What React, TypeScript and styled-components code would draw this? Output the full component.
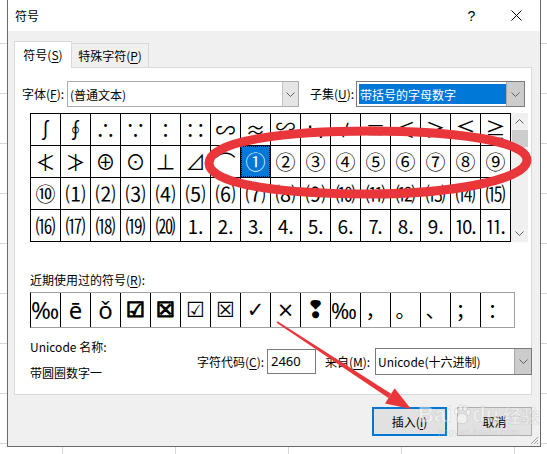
import React from 'react';
import styled, { createGlobalStyle } from 'styled-components';

const Global = createGlobalStyle`
  html, body { margin: 0; padding: 0; }
  body {
    font-family: "Noto Sans CJK SC", "Noto Sans", sans-serif;
    font-size: 12px;
    color: #000;
  }
`;

const Page = styled.div`
  position: relative;
  width: 547px;
  height: 454px;
  overflow: hidden;
  box-sizing: border-box;
  padding-left: 7px;
  background-color: #fff;
  background-image: linear-gradient(to bottom, #d6d6d6 1px, transparent 1px),
    linear-gradient(to right, #d6d6d6 1px, transparent 1px);
  background-size: 113px 50px;
  background-position: 62px 43px;
`;

const Dialog = styled.div`
  position: relative;
  width: 534px;
  height: 447px;
  box-sizing: border-box;
  border: 1px solid #6a6a6a;
  border-top: none;
  display: flex;
  flex-direction: column;
  background: #f0f0f0;
`;

const TitleBar = styled.div`
  height: 31px;
  flex: none;
  background: #fff;
  display: flex;
  align-items: center;
  padding-left: 7px;
`;

const Title = styled.span`
  font-size: 12px;
  line-height: 16px;
`;

const TitleButton = styled.div`
  width: 45px;
  height: 31px;
  display: flex;
  align-items: center;
  justify-content: center;
  font-family: "Liberation Sans", sans-serif;
  font-size: 14px;
`;

const TitleButtons = styled.div`
  margin-left: auto;
  display: flex;
  margin-right: 1px;
`;

const Body = styled.div`
  flex: 1;
  display: flex;
  flex-direction: column;
  padding: 10px 8px 0 6px;
`;

const TabRow = styled.div`
  height: 26px;
  display: flex;
  align-items: flex-end;
`;

const Tab = styled.div<{ $active?: boolean }>`
  box-sizing: border-box;
  height: ${(p) => (p.$active ? 27 : 24)}px;
  width: ${(p) => (p.$active ? 58 : 77)}px;
  margin-bottom: ${(p) => (p.$active ? -1 : 0)}px;
  border: 1px solid #d9d9d9;
  border-bottom: none;
  ${(p) => (p.$active ? '' : 'border-left: none;')}
  background: ${(p) => (p.$active ? '#fff' : '#f0f0f0')};
  position: relative;
  z-index: ${(p) => (p.$active ? 1 : 0)};
  display: flex;
  align-items: center;
  justify-content: center;
  font-size: 12px;
  line-height: 16px;
`;

const U = styled.span`
  text-decoration: underline;
  text-underline-offset: 2px;
`;

const Panel = styled.div`
  box-sizing: border-box;
  height: 328px;
  border: 1px solid #d9d9d9;
  background: #fff;
  padding: 13px 0 0 7px;
  display: flex;
  flex-direction: column;
`;

const Row = styled.div`
  display: flex;
  align-items: center;
`;

const Label = styled.span<{ $w: number; $ml?: number }>`
  width: ${(p) => p.$w}px;
  margin-left: ${(p) => p.$ml ?? 0}px;
  flex: none;
  font-size: 12px;
  line-height: 16px;
  white-space: nowrap;
`;

const Combo = styled.div<{ $w: number; $h?: number; $dark?: boolean }>`
  box-sizing: border-box;
  width: ${(p) => p.$w}px;
  height: ${(p) => p.$h ?? 26}px;
  border: 1px solid ${(p) => (p.$dark ? '#7a7a7a' : '#acacac')};
  background: #fff;
  display: flex;
  flex: none;
`;

const ComboText = styled.div`
  flex: 1;
  display: flex;
  align-items: center;
  padding-left: 2px;
  font-size: 12px;
  white-space: nowrap;
  overflow: hidden;
`;

const ComboSelected = styled.div`
  flex: 1;
  margin: 2px 0 2px 2px;
  background: #0078d7;
  color: #fff;
  display: flex;
  align-items: center;
  padding-left: 1px;
  font-size: 12px;
  white-space: nowrap;
`;

const ComboButton = styled.div<{ $w: number; $dark?: boolean }>`
  width: ${(p) => p.$w}px;
  flex: none;
  box-sizing: border-box;
  background: ${(p) => (p.$dark ? '#cccccc' : '#e5e5e5')};
  border-left: 1px solid ${(p) => (p.$dark ? '#a8a8a8' : '#c4c4c4')};
  display: flex;
  align-items: center;
  justify-content: center;
`;

const GridArea = styled.div`
  margin-top: 6px;
  margin-left: 8px;
  display: flex;
`;

const SymbolGrid = styled.div`
  display: grid;
  grid-template-columns: repeat(16, 29px);
  grid-auto-rows: 31px;
  gap: 1px;
  background: #000;
  border: 1px solid #000;
`;

const Cell = styled.div<{ $selected?: boolean; $size?: number; $narrow?: boolean }>`
  background: ${(p) => (p.$selected ? '#0078d7' : '#fff')};
  color: ${(p) => (p.$selected ? '#fff' : '#000')};
  ${(p) => (p.$selected ? 'outline: 1px dotted #000; outline-offset: -1px;' : '')}
  display: flex;
  align-items: center;
  justify-content: center;
  font-family: "Noto Sans CJK SC", "DejaVu Sans", sans-serif;
  font-size: ${(p) => p.$size ?? 20}px;
  letter-spacing: ${(p) => (p.$narrow ? '-1px' : '0')};
  line-height: 1;
  white-space: nowrap;
`;

const Scrollbar = styled.div`
  width: 17px;
  height: 129px;
  background: #f0f0f0;
  display: flex;
  flex-direction: column;
`;

const ScrollArrow = styled.div`
  height: 17px;
  display: flex;
  align-items: center;
  justify-content: center;
`;

const ScrollThumb = styled.div`
  height: 17px;
  margin-left: 1px;
  background: #cdcdcd;
`;

const ScrollTrack = styled.div`
  flex: 1;
`;

const RecentLabel = styled.div`
  margin-top: 30px;
  margin-left: 8px;
  font-size: 12px;
  line-height: 16px;
`;

const RecentBox = styled.div`
  margin-top: 4px;
  margin-left: 8px;
  width: 485px;
  height: 36px;
  box-sizing: border-box;
  border: 1px solid #a0a0a0;
  border-left-color: #000;
  display: grid;
  grid-template-columns: repeat(15, 30px) 1fr;
`;

const RecentCell = styled.div<{ $left?: boolean; $font?: string; $size?: number; $bold?: boolean }>`
  box-sizing: border-box;
  border-right: 1px solid #000;
  &:last-child { border-right: none; }
  display: flex;
  align-items: center;
  justify-content: ${(p) => (p.$left ? 'flex-start' : 'center')};
  font-family: ${(p) => p.$font ?? '"Noto Sans CJK SC", "DejaVu Sans", sans-serif'};
  font-size: ${(p) => p.$size ?? 22}px;
  ${(p) => (p.$bold ? '-webkit-text-stroke: 1.2px #000;' : '')}
  line-height: 1;
  white-space: nowrap;
`;

const InfoRow = styled.div`
  margin-top: 11px;
  margin-left: 8px;
  display: flex;
  align-items: flex-start;
`;

const InfoLeft = styled.div`
  width: 167px;
  flex: none;
  display: flex;
  flex-direction: column;
  font-size: 12px;
  line-height: 16px;
`;

const InfoValue = styled.div`
  margin-top: 10px;
`;

const InfoRight = styled.div`
  margin-top: 9px;
  display: flex;
  align-items: center;
`;

const CodeInput = styled.div`
  box-sizing: border-box;
  width: 49px;
  height: 25px;
  border: 1px solid #7a7a7a;
  background: #fff;
  padding: 2px 0 0 3px;
  font-family: "Noto Sans", sans-serif;
  font-size: 13px;
  line-height: 18px;
  flex: none;
`;

const ButtonRow = styled.div`
  margin-top: 12px;
  display: flex;
  justify-content: flex-end;
  gap: 10px;
`;

const Button = styled.div<{ $primary?: boolean }>`
  box-sizing: border-box;
  width: 75px;
  height: 29px;
  background: #e1e1e1;
  border: ${(p) => (p.$primary ? '2px solid #0078d7' : '1px solid #adadad')};
  display: flex;
  align-items: center;
  justify-content: center;
  font-size: 12px;
  line-height: 16px;
`;

const Grip = styled.svg`
  position: absolute;
  right: 1px;
  bottom: 1px;
`;

const Overlay = styled.svg`
  position: absolute;
  left: 0;
  top: 0;
  pointer-events: none;
`;

const Watermark = styled.div`
  position: absolute;
  left: 418px;
  top: 403px;
  width: max-content;
  pointer-events: none;
  display: flex;
  flex-direction: column;
  align-items: center;
  white-space: nowrap;
`;

const WmMain = styled.div`
  display: flex;
  align-items: center;
  font-family: "Liberation Sans", sans-serif;
  font-weight: 700;
  font-size: 22px;
  line-height: 24px;
  color: rgba(255, 255, 255, 0.45);
  -webkit-text-stroke: 0.5px rgba(170, 170, 170, 0.45);
`;

const WmCn = styled.span`
  font-family: "Noto Sans CJK SC", sans-serif;
  font-size: 18px;
  margin-left: 4px;
`;

const WmSub = styled.div`
  font-family: "Liberation Sans", sans-serif;
  font-size: 9px;
  line-height: 10px;
  color: rgba(200, 200, 200, 0.5);
  letter-spacing: 0.5px;
`;

const ChevronDown = () => (
  <svg width="9" height="5" viewBox="0 0 9 5">
    <polyline points="0.5,0.5 4.5,4.5 8.5,0.5" fill="none" stroke="#606060" strokeWidth="1" />
  </svg>
);

const ChevronUp = () => (
  <svg width="9" height="5" viewBox="0 0 9 5">
    <polyline points="0.5,4.5 4.5,0.5 8.5,4.5" fill="none" stroke="#606060" strokeWidth="1" />
  </svg>
);

const rows: string[][] = [
  ['∫', '∮', '∴', '∵', '∶', '∷', '∽', '≈', '≌', '≒', '≠', '≡', '≤', '≥', '≦', '≧'],
  ['≮', '≯', '⊕', '⊙', '⊥', '⊿', '⌒', '①', '②', '③', '④', '⑤', '⑥', '⑦', '⑧', '⑨'],
  ['⑩', '⑴', '⑵', '⑶', '⑷', '⑸', '⑹', '⑺', '⑻', '⑼', '⑽', '⑾', '⑿', '⒀', '⒁', '⒂'],
  ['⒃', '⒄', '⒅', '⒆', '⒇', '⒈', '⒉', '⒊', '⒋', '⒌', '⒍', '⒎', '⒏', '⒐', '⒑', '⒒'],
];

type Recent = { ch: string; left?: boolean; font?: string; size?: number; bold?: boolean };
const dejavu = '"DejaVu Sans", sans-serif';
const recent: Recent[] = [
  { ch: '‰', left: true, font: '"Noto Sans", sans-serif', size: 24 },
  { ch: 'ē', font: '"Noto Sans", sans-serif', size: 24 },
  { ch: 'ǒ', font: '"Noto Sans", sans-serif', size: 24 },
  { ch: '☑', font: dejavu, size: 21, bold: true },
  { ch: '☒', font: dejavu, size: 21, bold: true },
  { ch: '☑', font: dejavu, size: 21 },
  { ch: '☒', font: dejavu, size: 21 },
  { ch: '✓', font: dejavu, size: 21 },
  { ch: '×', font: dejavu, size: 21 },
  { ch: '❢', font: dejavu, size: 24 },
  { ch: '‰', left: true, font: '"Noto Sans", sans-serif', size: 22 },
  { ch: '，', size: 20 },
  { ch: '。', size: 20 },
  { ch: '、', size: 20 },
  { ch: '；', size: 20 },
  { ch: '：', size: 20 },
];

export default function App() {
  return (
    <Page>
      <Global />
      <Dialog>
        <TitleBar>
          <Title>符号</Title>
          <TitleButtons>
            <TitleButton>?</TitleButton>
            <TitleButton>
              <svg width="11" height="11" viewBox="0 0 11 11">
                <line x1="0.5" y1="0.5" x2="10.5" y2="10.5" stroke="#000" strokeWidth="1" />
                <line x1="10.5" y1="0.5" x2="0.5" y2="10.5" stroke="#000" strokeWidth="1" />
              </svg>
            </TitleButton>
          </TitleButtons>
        </TitleBar>
        <Body>
          <TabRow>
            <Tab $active>
              符号(<U>S</U>)
            </Tab>
            <Tab>
              特殊字符(<U>P</U>)
            </Tab>
          </TabRow>
          <Panel>
            <Row>
              <Label $w={45}>
                字体(<U>F</U>):
              </Label>
              <Combo $w={232}>
                <ComboText>(普通文本)</ComboText>
                <ComboButton $w={16}>
                  <ChevronDown />
                </ComboButton>
              </Combo>
              <Label $w={46} $ml={11}>
                子集(<U>U</U>):
              </Label>
              <Combo $w={169} $dark>
                <ComboSelected>带括号的字母数字</ComboSelected>
                <ComboButton $w={18} $dark>
                  <ChevronDown />
                </ComboButton>
              </Combo>
            </Row>
            <GridArea>
              <SymbolGrid>
                {rows.map((r, ri) =>
                  r.map((ch, ci) => (
                    <Cell
                      key={`${ri}-${ci}`}
                      $selected={ri === 1 && ci === 7}
                      $size={ri === 3 && ci >= 5 ? 19 : 20}
                      $narrow={ri === 3 && ci >= 14}
                    >
                      {ch}
                    </Cell>
                  ))
                )}
              </SymbolGrid>
              <Scrollbar>
                <ScrollArrow>
                  <ChevronUp />
                </ScrollArrow>
                <ScrollThumb />
                <ScrollTrack />
                <ScrollArrow>
                  <ChevronDown />
                </ScrollArrow>
              </Scrollbar>
            </GridArea>
            <RecentLabel>
              近期使用过的符号(<U>R</U>):
            </RecentLabel>
            <RecentBox>
              {recent.map((r, i) => (
                <RecentCell key={i} $left={r.left} $font={r.font} $size={r.size} $bold={r.bold}>
                  {r.ch}
                </RecentCell>
              ))}
            </RecentBox>
            <InfoRow>
              <InfoLeft>
                <span>Unicode 名称:</span>
                <InfoValue>带圆圈数字一</InfoValue>
              </InfoLeft>
              <InfoRight>
                <Label $w={70}>
                  字符代码(<U>C</U>):
                </Label>
                <CodeInput>2460</CodeInput>
                <Label $w={50} $ml={9}>
                  来自(<U>M</U>):
                </Label>
                <Combo $w={157} $h={27} $dark>
                  <ComboText>Unicode(十六进制)</ComboText>
                  <ComboButton $w={17} $dark>
                    <ChevronDown />
                  </ComboButton>
                </Combo>
              </InfoRight>
            </InfoRow>
          </Panel>
          <ButtonRow>
            <Button $primary>
              插入(<U>I</U>)
            </Button>
            <Button>取消</Button>
          </ButtonRow>
        </Body>
        <Grip width="10" height="10" viewBox="0 0 10 10">
          <line x1="9" y1="2" x2="2" y2="9" stroke="#a0a0a0" strokeWidth="1" />
          <line x1="9" y1="5" x2="5" y2="9" stroke="#a0a0a0" strokeWidth="1" />
          <line x1="9" y1="8" x2="8" y2="9" stroke="#a0a0a0" strokeWidth="1" />
        </Grip>
      </Dialog>
      <Watermark>
        <WmMain>
          Bai
          <svg width="18" height="22" viewBox="0 0 20 24" style={{ margin: '0 1px' }}>
            <g fill="rgba(255,255,255,0.5)" stroke="rgba(170,170,170,0.5)" strokeWidth="0.8">
              <ellipse cx="4" cy="8" rx="2.5" ry="3.2" />
              <ellipse cx="8.5" cy="4" rx="2.5" ry="3.2" />
              <ellipse cx="13.5" cy="4.5" rx="2.5" ry="3.2" />
              <ellipse cx="17" cy="9" rx="2.5" ry="3.2" />
              <path d="M10 10 C5 10 3 17 5 20 C7 22 13 22 15 20 C17 17 15 10 10 10 Z" />
            </g>
          </svg>
          du<WmCn>经验</WmCn>
        </WmMain>
        <WmSub>jingyan.baidu.com</WmSub>
      </Watermark>
      <Overlay width="547" height="454" viewBox="0 0 547 454">
        <path
          d="M 209 163 C 209 140 290 131 370 131 C 450 131 527 140 527 160 C 527 180 450 194 370 194 C 290 194 209 186 209 163 Z"
          fill="none"
          stroke="#e8363b"
          strokeWidth="9"
        />
        <polygon points="276.5,322.8 277.5,321.2 391.1,393.7 388.5,397.9" fill="#e8363b" />
        <polygon points="411,409 385,403.4 394.6,388.2" fill="#e8363b" />
      </Overlay>
    </Page>
  );
}
